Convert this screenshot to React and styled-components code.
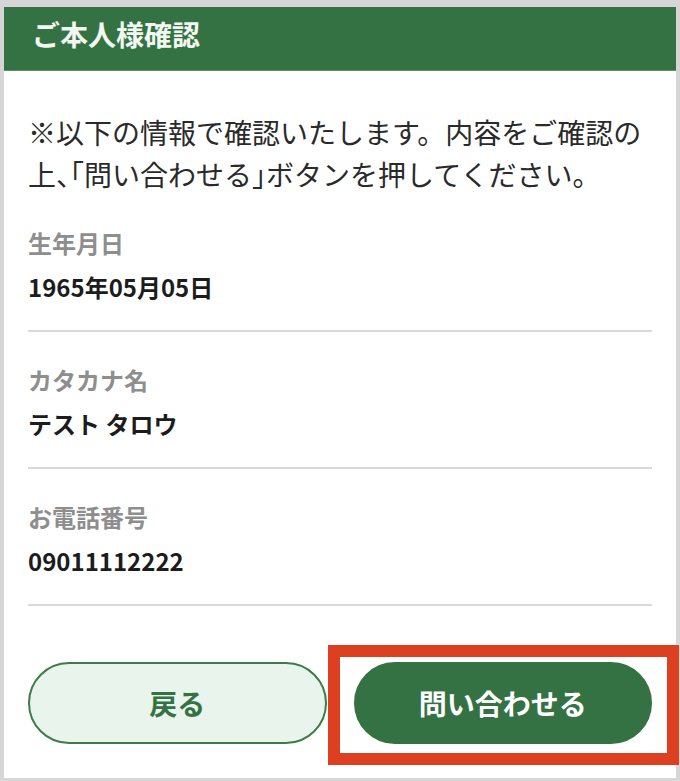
import React from 'react';
import styled, { createGlobalStyle } from 'styled-components';

const GlobalStyle = createGlobalStyle`
  html, body {
    margin: 0;
    padding: 0;
    background: #d6d6d6;
    overflow: hidden;
  }
  body {
    font-family: 'Noto Sans CJK JP', 'Noto Sans', sans-serif;
  }
`;

const Page = styled.div`
  padding: 7px 4px 3px 4px;
`;

const Panel = styled.div`
  background: #ffffff;
  height: 771px;
  box-sizing: border-box;
  padding-bottom: 34px;
`;

const Header = styled.div`
  background: #347243;
  height: 64px;
  box-sizing: border-box;
  padding: 7px 26px 0 28px;
  border-bottom: 1px solid #5e8f67;
`;

const HeaderTitle = styled.h1`
  margin: 0;
  font-size: 28px;
  line-height: 40px;
  font-weight: 700;
  color: #f2f7f2;
`;

const Body = styled.div`
  padding: 0 24px;
`;

const Intro = styled.p`
  margin: 0;
  padding-top: 40px;
  font-size: 28px;
  line-height: 42px;
  color: #2a2a2a;
  font-weight: 400;
`;

// half-width punctuation, as the reference squeezes 、「 and 」
const Tight = styled.span`
  font-feature-settings: 'halt';
`;

const Item = styled.div`
  padding: 28px 0 23px;
  border-bottom: 2px solid #d9d9d9;
`;

const Label = styled.div`
  font-size: 24px;
  line-height: 40px;
  font-weight: 700;
  color: #8e8e8e;
`;

const Value = styled.div`
  margin-top: 4px;
  font-size: 24px;
  line-height: 40px;
  font-weight: 700;
  color: #1c1c1c;
`;

const ButtonRow = styled.div`
  display: grid;
  grid-template-columns: 1fr 1fr;
  gap: 27px;
  margin-top: 56px;
`;

const ButtonSlot = styled.div`
  position: relative;
`;

const PillButton = styled.button`
  width: 100%;
  height: 82px;
  border-radius: 41px;
  box-sizing: border-box;
  font-family: 'Noto Sans CJK JP', 'Noto Sans', sans-serif;
  font-size: 28px;
  font-weight: 700;
  cursor: pointer;
  border: 2px solid ${({ $primary }) => ($primary ? '#347243' : '#3d7b4a')};
  background: ${({ $primary }) => ($primary ? '#347243' : '#e9f4ec')};
  color: ${({ $primary }) => ($primary ? '#ffffff' : '#347243')};
`;

const Highlight = styled.div`
  position: absolute;
  top: -17px;
  bottom: -21px;
  left: -26px;
  right: -27px;
  border: 12px solid #dd4020;
  pointer-events: none;
`;

const fields = [
  { label: '生年月日', value: '1965年05月05日' },
  { label: 'カタカナ名', value: 'テスト タロウ' },
  { label: 'お電話番号', value: '09011112222' },
];

export default function App() {
  return (
    <>
      <GlobalStyle />
      <Page>
        <Panel>
          <Header>
            <HeaderTitle>ご本人様確認</HeaderTitle>
          </Header>
          <Body>
            <Intro>
              ※以下の情報で確認いたします。内容をご確認の上<Tight>、「</Tight>問い合わせる<Tight>」</Tight>ボタンを押してください。
            </Intro>
            {fields.map((f) => (
              <Item key={f.label}>
                <Label>{f.label}</Label>
                <Value>{f.value}</Value>
              </Item>
            ))}
            <ButtonRow>
              <ButtonSlot>
                <PillButton type="button">戻る</PillButton>
              </ButtonSlot>
              <ButtonSlot>
                <PillButton type="button" $primary>問い合わせる</PillButton>
                <Highlight />
              </ButtonSlot>
            </ButtonRow>
          </Body>
        </Panel>
      </Page>
    </>
  );
}
